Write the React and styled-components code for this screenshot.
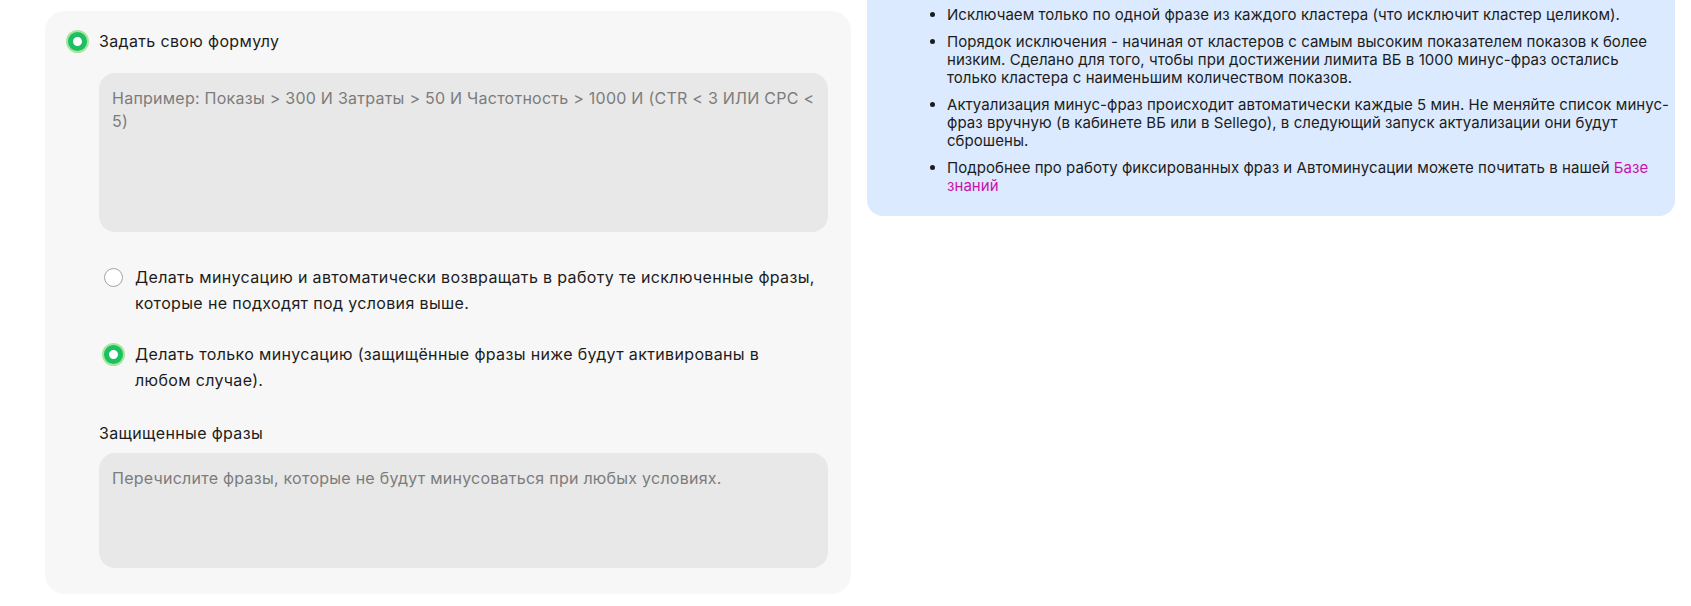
import React from 'react';
import styled, { createGlobalStyle } from 'styled-components';

const GlobalStyle = createGlobalStyle`
  body {
    margin: 0;
    background: #ffffff;
    font-family: Inter, "Noto Sans", sans-serif;
    color: #1c1c1c;
  }
`;

const Page = styled.div`
  display: flex;
  align-items: flex-start;
  gap: 16px;
  padding: 0 16px 0 45px;
`;

const FormCard = styled.div`
  width: 806px;
  box-sizing: border-box;
  margin-top: 11px;
  padding: 18px 23px 26px 18px;
  background: #f7f7f7;
  border-radius: 20px;
  letter-spacing: 0.35px;
`;

const RadioRow = styled.label`
  display: flex;
  align-items: flex-start;
  gap: 8px;
  font-size: 16px;
  line-height: ${p => (p.$wrap ? '26px' : '24px')};
  color: #1c1c1c;
  cursor: pointer;
`;

const RadioCell = styled.span`
  flex: 0 0 28px;
  height: ${p => (p.$wrap ? '26px' : '24px')};
  display: flex;
  align-items: center;
  justify-content: center;
`;

const RadioDot = styled.span`
  box-sizing: border-box;
  width: 19px;
  height: 19px;
  border-radius: 50%;
  background: #ffffff;
  border: ${p => (p.$checked ? '5px solid #1cbf62' : '1.5px solid #a3a3a3')};
  box-shadow: ${p => (p.$checked ? '0 0 0 2px #a6e69b' : 'none')};
`;

const Nested = styled.div`
  margin-left: 36px;
  display: flex;
  flex-direction: column;
`;

const TextArea = styled.textarea`
  display: block;
  width: 100%;
  height: ${p => p.$height}px;
  box-sizing: border-box;
  padding: 14px 10px 14px 13px;
  border: none;
  outline: none;
  resize: none;
  border-radius: 16px;
  background: #e8e8e8;
  font-family: inherit;
  font-size: 16px;
  line-height: 23px;
  letter-spacing: 0.25px;
  color: #1c1c1c;

  &::placeholder {
    color: #7c7c7c;
  }
`;

const FormulaBox = styled.div`
  margin-top: 20px;
`;

const Options = styled.div`
  display: flex;
  flex-direction: column;
  gap: 25px;
  margin: 32px 10px 0 0;
`;

const FieldLabel = styled.div`
  margin-top: 28px;
  margin-bottom: 8px;
  font-size: 16px;
  line-height: 24px;
  color: #1c1c1c;
`;

const InfoPanel = styled.div`
  width: 808px;
  box-sizing: border-box;
  padding: 6px 4px 21px 0;
  background: #dbeafe;
  border-radius: 0 0 16px 16px;
`;

const InfoList = styled.ul`
  margin: 0;
  padding-left: 80px;
  font-size: 15px;
  line-height: 18px;
  letter-spacing: 0.05px;
  color: #1c1c1c;
`;

const InfoItem = styled.li`
  margin-bottom: 9px;

  &:last-child {
    margin-bottom: 0;
  }
`;

const Link = styled.a`
  color: #cb11ab;
  text-decoration: none;
`;

function Radio({ checked, wrap, children }) {
  return (
    <RadioRow $wrap={wrap}>
      <RadioCell $wrap={wrap}>
        <RadioDot $checked={checked} />
      </RadioCell>
      <span>{children}</span>
    </RadioRow>
  );
}

export default function App() {
  return (
    <>
      <GlobalStyle />
      <Page>
        <FormCard>
          <Radio checked>Задать свою формулу</Radio>
          <Nested>
            <FormulaBox>
              <TextArea
                $height={159}
                placeholder="Например: Показы > 300 И Затраты > 50 И Частотность > 1000 И (CTR < 3 ИЛИ CPC < 5)"
              />
            </FormulaBox>
            <Options>
              <Radio wrap>
                Делать минусацию и автоматически возвращать в работу те исключенные фразы, которые не подходят под условия выше.
              </Radio>
              <Radio wrap checked>
                Делать только минусацию (защищённые фразы ниже будут активированы в любом случае).
              </Radio>
            </Options>
            <FieldLabel>Защищенные фразы</FieldLabel>
            <TextArea
              $height={115}
              placeholder="Перечислите фразы, которые не будут минусоваться при любых условиях."
            />
          </Nested>
        </FormCard>

        <InfoPanel>
          <InfoList>
            <InfoItem>Исключаем только по одной фразе из каждого кластера (что исключит кластер целиком).</InfoItem>
            <InfoItem>
              Порядок исключения - начиная от кластеров с самым высоким показателем показов к более низким. Сделано для того, чтобы при достижении лимита ВБ в 1000 минус-фраз остались только кластера с наименьшим количеством показов.
            </InfoItem>
            <InfoItem>
              Актуализация минус-фраз происходит автоматически каждые 5 мин. Не меняйте список минус-фраз вручную (в кабинете ВБ или в Sellego), в следующий запуск актуализации они будут
              <br />
              сброшены.
            </InfoItem>
            <InfoItem>
              Подробнее про работу фиксированных фраз и Автоминусации можете почитать в нашей <Link href="#">Базе знаний</Link>
            </InfoItem>
          </InfoList>
        </InfoPanel>
      </Page>
    </>
  );
}
